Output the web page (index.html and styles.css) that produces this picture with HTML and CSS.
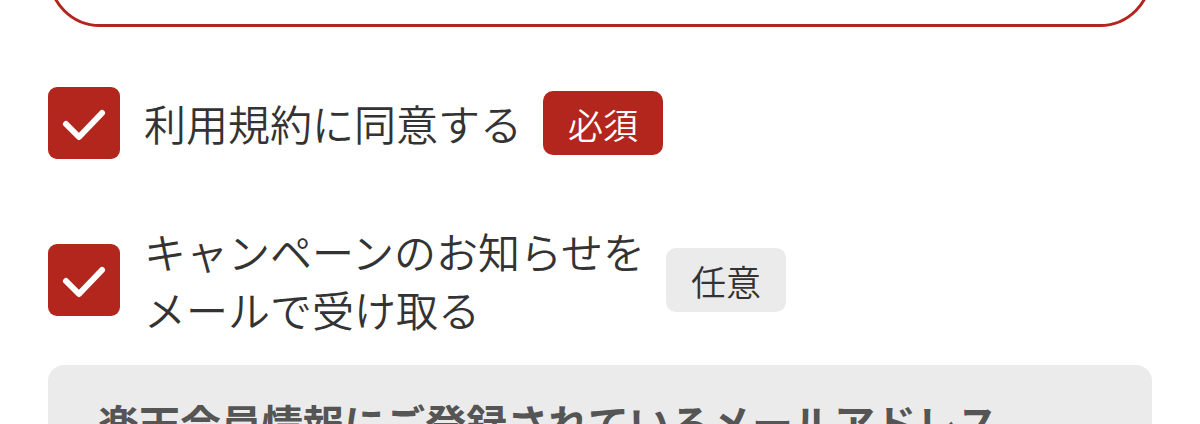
FILE: index.html
```html
<!DOCTYPE html>
<html lang="ja">
<head>
<meta charset="utf-8">
<title>同意</title>
<link rel="stylesheet" href="styles.css">
</head>
<body>
<div class="page">
  <div class="field-box"></div>

  <div class="agree-row row-terms">
    <span class="checkbox">
      <svg viewBox="0 0 72 72" width="72" height="72" aria-hidden="true"><polyline points="18,37 31,50 54,26" fill="none" stroke="#fff" stroke-width="6" stroke-linecap="round" stroke-linejoin="round"/></svg>
    </span>
    <span class="label">利用規約に同意する</span>
    <span class="badge badge-required">必須</span>
  </div>

  <div class="agree-row row-campaign">
    <span class="checkbox">
      <svg viewBox="0 0 72 72" width="72" height="72" aria-hidden="true"><polyline points="18,37 31,50 54,26" fill="none" stroke="#fff" stroke-width="6" stroke-linecap="round" stroke-linejoin="round"/></svg>
    </span>
    <span class="label">キャンペーンのお知らせを<br>メールで受け取る</span>
    <span class="badge badge-optional">任意</span>
  </div>

  <div class="info-box">
    <p class="info-title">楽天会員情報にご登録されているメールアドレス</p>
  </div>
</div>
</body>
</html>
```

FILE: styles.css
```css
html, body {
  margin: 0;
  padding: 0;
  background: #fff;
}

body {
  font-family: "Noto Sans CJK JP", "Noto Sans", sans-serif;
  color: #333;
  overflow: hidden;
}

.page {
  padding: 0 48px;
}

.field-box {
  height: 120px;
  margin-top: -93px;
  box-sizing: border-box;
  border: 3px solid #b3261e;
  border-radius: 52px;
}

.agree-row {
  display: flex;
  align-items: center;
}

.row-terms {
  margin-top: 60px;
}

.row-campaign {
  margin-top: 63px;
}

.checkbox {
  flex: none;
  width: 72px;
  height: 72px;
  border-radius: 9px;
  background: #b3261e;
  display: flex;
}

.label {
  margin-left: 24px;
  font-size: 42px;
  font-weight: 350;
  line-height: 58px;
  color: #333;
}

.badge {
  flex: none;
  margin-left: 21px;
  width: 120px;
  height: 64px;
  border-radius: 10px;
  display: flex;
  align-items: center;
  justify-content: center;
  font-size: 35px;
  font-weight: 350;
}

.badge-required {
  background: #b3261e;
  color: #fff;
}

.badge-optional {
  background: #ebebeb;
  color: #333;
}

.info-box {
  margin-top: 27px;
  background: #ebebeb;
  border-radius: 16px;
  padding: 28px 50px;
}

.info-title {
  margin: 0;
  font-size: 41px;
  font-weight: bold;
  line-height: 58px;
  color: #555;
}
```
